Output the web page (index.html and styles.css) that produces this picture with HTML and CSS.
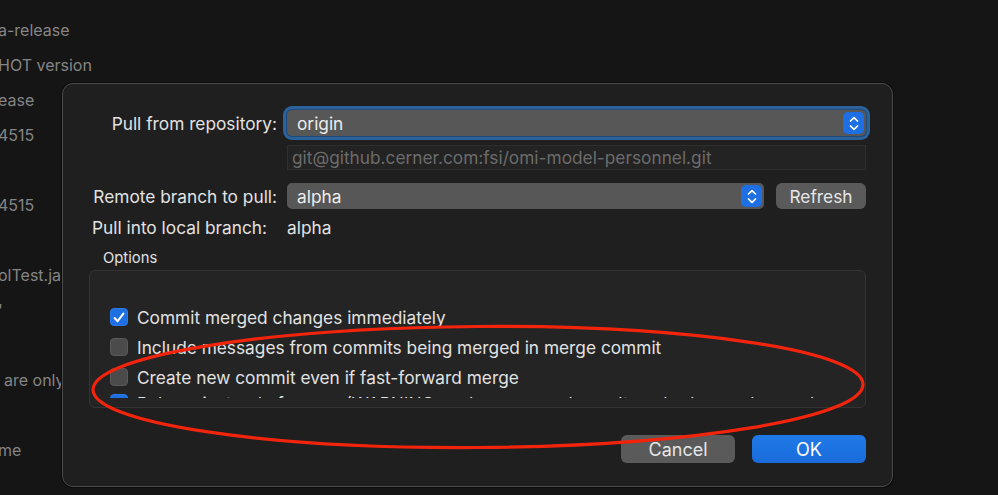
FILE: index.html
```html
<!DOCTYPE html>
<html lang="en">
<head>
    <meta charset="UTF-8">
    <title>Pull</title>
    <link rel="stylesheet" href="styles.css">
</head>
<body>
    <div class="backdrop">
        <div class="bg-line">a-release</div>
        <div class="bg-line">HOT version</div>
        <div class="bg-line">ease</div>
        <div class="bg-line">4515</div>
        <div class="bg-line"></div>
        <div class="bg-line">4515</div>
        <div class="bg-line"></div>
        <div class="bg-line">olTest.java</div>
        <div class="bg-line">'</div>
        <div class="bg-line"></div>
        <div class="bg-line indent">are only</div>
        <div class="bg-line"></div>
        <div class="bg-line">me</div>
    </div>

    <div class="dialog">
        <div class="form">
            <label class="label first">Pull from repository:</label>
            <div class="popup focused">
                <span>origin</span>
                <span class="stepper">
                    <svg width="10" height="15" viewBox="0 0 10 15"><path d="M1.5 5 L5 1.6 L8.5 5 M1.5 10 L5 13.4 L8.5 10" fill="none" stroke="#fff" stroke-width="1.7" stroke-linecap="round" stroke-linejoin="round"/></svg>
                </span>
            </div>

            <div></div>
            <div class="url">git@github.cerner.com:fsi/omi-model-personnel.git</div>

            <label class="label second">Remote branch to pull:</label>
            <div class="branch-row">
                <div class="popup">
                    <span>alpha</span>
                    <span class="stepper">
                        <svg width="10" height="15" viewBox="0 0 10 15"><path d="M1.5 5 L5 1.6 L8.5 5 M1.5 10 L5 13.4 L8.5 10" fill="none" stroke="#fff" stroke-width="1.7" stroke-linecap="round" stroke-linejoin="round"/></svg>
                    </span>
                </div>
                <button class="btn">Refresh</button>
            </div>

            <label class="label third">Pull into local branch:</label>
            <div class="value">alpha</div>
        </div>

        <div class="options-title">Options</div>
        <div class="options">
            <div class="option-list">
                <div class="option"><span class="check on"><svg width="12" height="11" viewBox="0 0 12 11"><path d="M1.6 6 L4.6 9.2 L10.4 1.6" fill="none" stroke="#fff" stroke-width="2" stroke-linecap="round" stroke-linejoin="round"/></svg></span>Commit merged changes immediately</div>
                <div class="option"><span class="check"></span>Include messages from commits being merged in merge commit</div>
                <div class="option"><span class="check"></span>Create new commit even if fast-forward merge</div>
                <div class="option last"><span class="check on"></span>Rebase instead of merge (WARNING: make sure you haven't pushed your changes)</div>
            </div>
        </div>

        <div class="actions">
            <button class="btn wide">Cancel</button>
            <button class="btn wide primary">OK</button>
        </div>
    </div>

    <svg class="annotation" width="998" height="495" viewBox="0 0 998 495">
        <ellipse cx="478" cy="387" rx="385" ry="60.5" transform="rotate(-0.4 478 387)" fill="none" stroke="#f3240c" stroke-width="3.2"/>
    </svg>
</body>
</html>
```

FILE: styles.css
```css
* {
    margin: 0;
    padding: 0;
    box-sizing: border-box;
}

body {
    width: 998px;
    height: 495px;
    overflow: hidden;
    position: relative;
    background: #151515;
    font-family: Inter, "Liberation Sans", sans-serif;
    color: #e2e2e2;
}

.backdrop {
    padding-top: 13px;
    font-size: 16px;
    color: #858585;
}

.bg-line {
    height: 35px;
    line-height: 35px;
    margin-left: -2px;
    white-space: nowrap;
}

.bg-line.indent { margin-left: 4px; }

.dialog {
    position: absolute;
    left: 62px;
    top: 83px;
    width: 831px;
    height: 404px;
    background: #1f1f1f;
    border: 1px solid #4a4a4a;
    border-radius: 11px;
    padding: 26px 26px 0 26px;
    box-shadow: 0 0 0 1px #0c0c0c;
}

.form {
    display: grid;
    grid-template-columns: 188px 579px;
    column-gap: 10px;
    font-size: 17.3px;
}

.label {
    display: flex;
    align-items: center;
    white-space: nowrap;
}

.label.first, .label.second { justify-content: flex-end; }
.label.third { padding-left: 3px; }

.popup {
    height: 26px;
    background: #575757;
    border-radius: 5px;
    display: flex;
    align-items: center;
    justify-content: space-between;
    padding: 0 2px 0 10px;
    color: #ededed;
}

.popup.focused {
    box-shadow: 0 0 0 1px #1d4a78, 0 0 0 4px #2b6299;
}

.stepper {
    width: 21px;
    height: 22px;
    background: #1e6fe3;
    border-radius: 5px;
    display: flex;
    align-items: center;
    justify-content: center;
}

.url {
    margin-top: 9px;
    height: 25px;
    background: #232323;
    border: 1px solid #2e2e2e;
    color: #6c6c6c;
    padding-left: 4px;
    line-height: 23px;
}

.second, .branch-row { margin-top: 13px; }

.branch-row {
    display: flex;
    gap: 12px;
}

.branch-row .popup {
    flex: 1;
    height: 26px;
}

.btn {
    font-family: inherit;
    font-size: 17.3px;
    color: #e6e6e6;
    background: #5a5a5a;
    border: none;
    border-radius: 6px;
    width: 90px;
    height: 26px;
}

.third, .value {
    margin-top: 8px;
    height: 22px;
    line-height: 22px;
}

.options-title {
    margin: 9px 0 0 14px;
    font-size: 14.8px;
    height: 20px;
    line-height: 20px;
}

.options {
    margin-top: 2px;
    height: 138px;
    background: #242424;
    border: 1px solid #333333;
    border-radius: 6px;
    padding: 0 0 9px 20px;
}

.option-list {
    height: 127px;
    overflow: hidden;
    padding-top: 31px;
    font-size: 17.3px;
}

.option {
    height: 30px;
    display: flex;
    align-items: center;
    gap: 9px;
    white-space: nowrap;
}

.option.last { margin-top: -4px; }

.check {
    width: 18px;
    height: 18px;
    border-radius: 4px;
    background: #4b4b4b;
    border: 1px solid #595959;
    display: flex;
    align-items: center;
    justify-content: center;
}

.check.on {
    background: #1d6fe2;
    border-color: #2a7bea;
}

.actions {
    margin-top: 27px;
    display: flex;
    justify-content: flex-end;
    gap: 17px;
}

.btn.wide {
    width: 114px;
    height: 28px;
    font-size: 18px;
}

.btn.primary {
    background: linear-gradient(#1f7ae8, #1a6bda);
    color: #ffffff;
}

.annotation {
    position: absolute;
    left: 0;
    top: 0;
    pointer-events: none;
}
```
